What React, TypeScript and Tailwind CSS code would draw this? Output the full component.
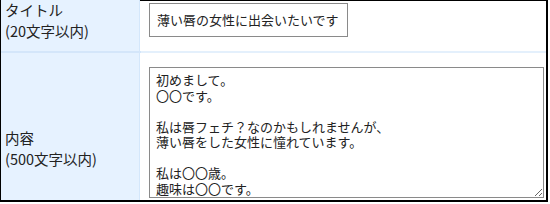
import React from "react";

const body = `初めまして。
〇〇です。

私は唇フェチ？なのかもしれませんが、
薄い唇をした女性に憧れています。

私は〇〇歳。
趣味は〇〇です。`;

const font = { fontFamily: '"Noto Sans CJK JP", "Noto Sans", sans-serif' };

export default function App() {
  return (
    <div className="w-[550px] h-[204px] bg-white" style={font}>
      <div className="w-[548px] h-[202px] border-l border-r-2 border-b-2 border-black flex flex-col text-[#222]">
        {/* タイトル */}
        <div className="flex h-[51px]">
          <div className="w-[139px] bg-[#e6f2ff] border-r border-[#d4e7fb] pl-[4px] text-[14.5px] leading-[21px] -mt-[1px]">
            <div>タイトル</div>
            <div>(20文字以内)</div>
          </div>
          <div className="flex-1 border-t border-black pl-[9px] pt-[2px]">
            <div className="w-[199px] h-[34px] border border-[#8a8a8a] px-[7px] text-[13px] leading-[32px] whitespace-nowrap">
              薄い唇の女性に出会いたいです
            </div>
          </div>
        </div>
        <div className="h-[2px] flex">
          <div className="w-[140px] bg-[#d4e6fa]" />
          <div className="flex-1 bg-[#e4f0fc]" />
        </div>
        {/* 内容 */}
        <div className="flex flex-1">
          <div className="w-[139px] bg-[#e6f2ff] border-r border-[#d4e7fb] pl-[4px] pt-[74px] text-[14.5px] leading-[21px]">
            <div>内容</div>
            <div>(500文字以内)</div>
          </div>
          <div className="flex-1 pl-[9px] pt-[14px]">
            <textarea
              readOnly
              defaultValue={body}
              className="block w-[395px] h-[131px] border border-[#8a8a8a] px-[6px] pt-[4px] text-[13px] leading-[15.5px] text-[#222] outline-none resize-y overflow-hidden"
              style={font}
            />
          </div>
        </div>
      </div>
    </div>
  );
}
